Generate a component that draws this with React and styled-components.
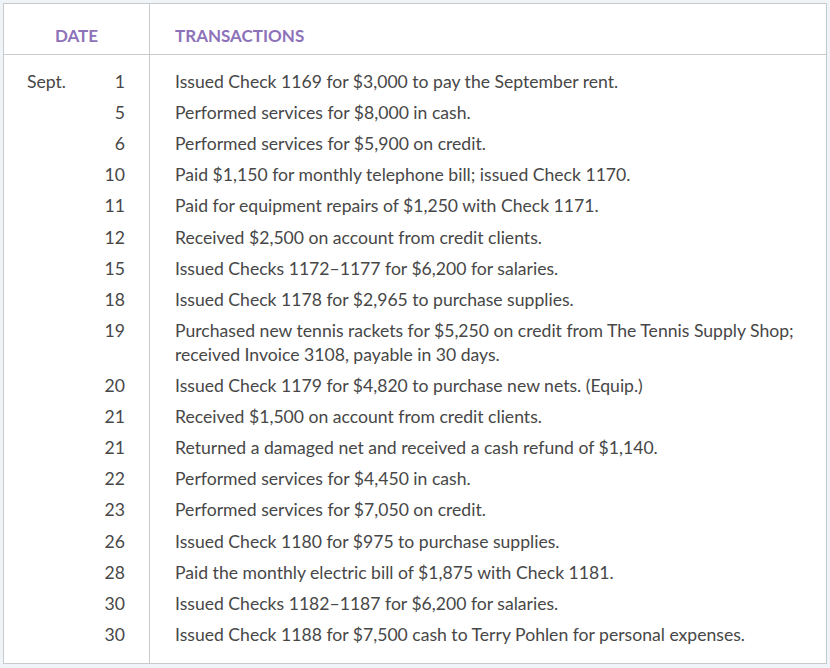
import React from "react";
import styled, { createGlobalStyle } from "styled-components";

const rows = [
  ["Sept.", "1", "Issued Check 1169 for $3,000 to pay the September rent."],
  ["", "5", "Performed services for $8,000 in cash."],
  ["", "6", "Performed services for $5,900 on credit."],
  ["", "10", "Paid $1,150 for monthly telephone bill; issued Check 1170."],
  ["", "11", "Paid for equipment repairs of $1,250 with Check 1171."],
  ["", "12", "Received $2,500 on account from credit clients."],
  ["", "15", "Issued Checks 1172\u20131177 for $6,200 for salaries."],
  ["", "18", "Issued Check 1178 for $2,965 to purchase supplies."],
  [
    "",
    "19",
    "Purchased new tennis rackets for $5,250 on credit from The Tennis Supply Shop; received Invoice 3108, payable in 30 days.",
  ],
  ["", "20", "Issued Check 1179 for $4,820 to purchase new nets. (Equip.)"],
  ["", "21", "Received $1,500 on account from credit clients."],
  ["", "21", "Returned a damaged net and received a cash refund of $1,140."],
  ["", "22", "Performed services for $4,450 in cash."],
  ["", "23", "Performed services for $7,050 on credit."],
  ["", "26", "Issued Check 1180 for $975 to purchase supplies."],
  ["", "28", "Paid the monthly electric bill of $1,875 with Check 1181."],
  ["", "30", "Issued Checks 1182\u20131187 for $6,200 for salaries."],
  ["", "30", "Issued Check 1188 for $7,500 cash to Terry Pohlen for personal expenses."],
];

const GlobalStyle = createGlobalStyle`
  body {
    margin: 0;
    background: #eef4f8;
    font-family: Lato, "Liberation Sans", sans-serif;
  }
`;

const Page = styled.div`
  padding: 3px 0 0 3px;
  width: 830px;
  height: 668px;
  box-sizing: border-box;
`;

const Table = styled.table`
  width: 824px;
  border-collapse: collapse;
  background: #fff;
  border: 1px solid #c9cacc;
  color: #474747;
  font-size: 17.6px;
`;

const HeadCell = styled.th`
  padding: 20px 0 6px ${(p) => (p.$left ? "25px" : "0")};
  text-align: ${(p) => (p.$left ? "left" : "center")};
  font-weight: 700;
  color: #8d72b9;
  font-size: 17px;
  line-height: 24px;
  border-bottom: 1px solid #c9cacc;
  border-right: ${(p) => (p.$left ? "none" : "1px solid #c9cacc")};
  width: ${(p) => (p.$left ? "auto" : "145px")};
`;

const DateCell = styled.td`
  padding: ${(p) => (p.$first ? "15px" : "3px")} 24px ${(p) => (p.$last ? "16px" : "4.12px")} 23px;
  vertical-align: top;
  line-height: 24px;
  border-right: 1px solid #c9cacc;
`;

const DateInner = styled.div`
  display: flex;
  justify-content: space-between;
`;

const TextCell = styled.td`
  padding: ${(p) => (p.$first ? "15px" : "3px")} 30px ${(p) => (p.$last ? "16px" : "4.12px")} 25px;
  vertical-align: top;
  line-height: 24px;
`;

export default function App() {
  return (
    <Page>
      <GlobalStyle />
      <Table>
        <thead>
          <tr>
            <HeadCell>DATE</HeadCell>
            <HeadCell $left>TRANSACTIONS</HeadCell>
          </tr>
        </thead>
        <tbody>
          {rows.map(([month, day, text], i) => {
            const first = i === 0;
            const last = i === rows.length - 1;
            return (
              <tr key={i}>
                <DateCell $first={first} $last={last}>
                  <DateInner>
                    <span>{month}</span>
                    <span>{day}</span>
                  </DateInner>
                </DateCell>
                <TextCell $first={first} $last={last}>
                  {text}
                </TextCell>
              </tr>
            );
          })}
        </tbody>
      </Table>
    </Page>
  );
}
